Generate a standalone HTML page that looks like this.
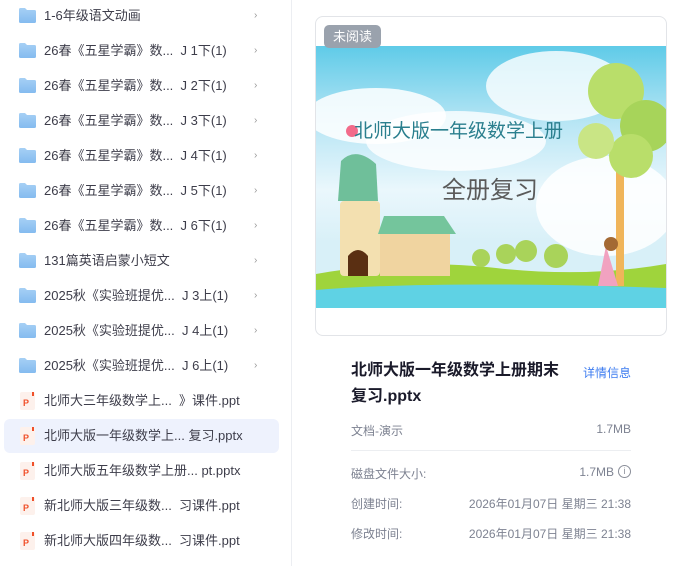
<!DOCTYPE html>
<html><head><meta charset="utf-8"><style>
*{margin:0;padding:0;box-sizing:border-box}
body{width:681px;height:566px;background:#fff;font-family:"Liberation Sans","Noto Sans CJK SC",sans-serif;position:relative;overflow:hidden;color:#333}
.row{position:absolute;left:4px;width:275px;height:34px;border-radius:6px;font-size:13px;color:#3d3d4a;line-height:34px}
.row .t{position:absolute;left:40px;top:0;white-space:nowrap}
.row .c{position:absolute;left:250px;top:0;color:#999;font-size:10px}
.fold{position:absolute;left:15px;top:9px;width:17px;height:15px}
.ppt{position:absolute;left:16px;top:8px;width:15px;height:18px;background:#fdf1ec;border-radius:2px}
.ppt b{position:absolute;left:3px;top:6px;font-size:9px;color:#f0502a;font-weight:bold;line-height:10px}
.ppt i{position:absolute;right:1px;top:0;width:2px;height:4px;background:#f0502a}
.sel{background:#eef2fd}
.card{position:absolute;left:315px;top:16px;width:352px;height:320px;border:1px solid #e2e4e8;border-radius:8px;overflow:hidden}
.img{position:absolute;left:0;top:29px;width:350px;height:262px;background:linear-gradient(180deg,#5fcbe8 0%,#b9e6f5 30%,#eaf7fc 55%,#d8f0f8 75%)}
.lbl{position:absolute;color:#7d8291;font-size:12px}
</style></head><body>
<div style="position:absolute;left:291px;top:0;width:1px;height:566px;background:#eceef2"></div>

<svg width="0" height="0" style="position:absolute"><defs><linearGradient id="fg" x1="0" y1="0" x2="0" y2="1"><stop offset="0" stop-color="#a6d0f5"/><stop offset="1" stop-color="#84bbef"/></linearGradient></defs></svg>

<div class="row" style="top:-1px"><svg class="fold" viewBox="0 0 17 15"><path d="M0 1.5Q0 0 1.5 0H6l2 2h7.5Q17 2 17 3.5V13.5Q17 15 15.5 15H1.5Q0 15 0 13.5Z" fill="url(#fg)"/></svg><span class="t">1-6年级语文动画</span><span class="c">›</span></div>
<div class="row" style="top:34px"><svg class="fold" viewBox="0 0 17 15"><path d="M0 1.5Q0 0 1.5 0H6l2 2h7.5Q17 2 17 3.5V13.5Q17 15 15.5 15H1.5Q0 15 0 13.5Z" fill="url(#fg)"/></svg><span class="t">26春《五星学霸》数...&nbsp;&nbsp;J 1下(1)</span><span class="c">›</span></div>
<div class="row" style="top:69px"><svg class="fold" viewBox="0 0 17 15"><path d="M0 1.5Q0 0 1.5 0H6l2 2h7.5Q17 2 17 3.5V13.5Q17 15 15.5 15H1.5Q0 15 0 13.5Z" fill="url(#fg)"/></svg><span class="t">26春《五星学霸》数...&nbsp;&nbsp;J 2下(1)</span><span class="c">›</span></div>
<div class="row" style="top:104px"><svg class="fold" viewBox="0 0 17 15"><path d="M0 1.5Q0 0 1.5 0H6l2 2h7.5Q17 2 17 3.5V13.5Q17 15 15.5 15H1.5Q0 15 0 13.5Z" fill="url(#fg)"/></svg><span class="t">26春《五星学霸》数...&nbsp;&nbsp;J 3下(1)</span><span class="c">›</span></div>
<div class="row" style="top:139px"><svg class="fold" viewBox="0 0 17 15"><path d="M0 1.5Q0 0 1.5 0H6l2 2h7.5Q17 2 17 3.5V13.5Q17 15 15.5 15H1.5Q0 15 0 13.5Z" fill="url(#fg)"/></svg><span class="t">26春《五星学霸》数...&nbsp;&nbsp;J 4下(1)</span><span class="c">›</span></div>
<div class="row" style="top:174px"><svg class="fold" viewBox="0 0 17 15"><path d="M0 1.5Q0 0 1.5 0H6l2 2h7.5Q17 2 17 3.5V13.5Q17 15 15.5 15H1.5Q0 15 0 13.5Z" fill="url(#fg)"/></svg><span class="t">26春《五星学霸》数...&nbsp;&nbsp;J 5下(1)</span><span class="c">›</span></div>
<div class="row" style="top:209px"><svg class="fold" viewBox="0 0 17 15"><path d="M0 1.5Q0 0 1.5 0H6l2 2h7.5Q17 2 17 3.5V13.5Q17 15 15.5 15H1.5Q0 15 0 13.5Z" fill="url(#fg)"/></svg><span class="t">26春《五星学霸》数...&nbsp;&nbsp;J 6下(1)</span><span class="c">›</span></div>
<div class="row" style="top:244px"><svg class="fold" viewBox="0 0 17 15"><path d="M0 1.5Q0 0 1.5 0H6l2 2h7.5Q17 2 17 3.5V13.5Q17 15 15.5 15H1.5Q0 15 0 13.5Z" fill="url(#fg)"/></svg><span class="t">131篇英语启蒙小短文</span><span class="c">›</span></div>
<div class="row" style="top:279px"><svg class="fold" viewBox="0 0 17 15"><path d="M0 1.5Q0 0 1.5 0H6l2 2h7.5Q17 2 17 3.5V13.5Q17 15 15.5 15H1.5Q0 15 0 13.5Z" fill="url(#fg)"/></svg><span class="t">2025秋《实验班提优...&nbsp;&nbsp;J 3上(1)</span><span class="c">›</span></div>
<div class="row" style="top:314px"><svg class="fold" viewBox="0 0 17 15"><path d="M0 1.5Q0 0 1.5 0H6l2 2h7.5Q17 2 17 3.5V13.5Q17 15 15.5 15H1.5Q0 15 0 13.5Z" fill="url(#fg)"/></svg><span class="t">2025秋《实验班提优...&nbsp;&nbsp;J 4上(1)</span><span class="c">›</span></div>
<div class="row" style="top:349px"><svg class="fold" viewBox="0 0 17 15"><path d="M0 1.5Q0 0 1.5 0H6l2 2h7.5Q17 2 17 3.5V13.5Q17 15 15.5 15H1.5Q0 15 0 13.5Z" fill="url(#fg)"/></svg><span class="t">2025秋《实验班提优...&nbsp;&nbsp;J 6上(1)</span><span class="c">›</span></div>
<div class="row" style="top:384px"><div class="ppt"><b>P</b><i></i></div><span class="t">北师大三年级数学上...&nbsp;&nbsp;》课件.ppt</span></div>
<div class="row sel" style="top:419px"><div class="ppt"><b>P</b><i></i></div><span class="t">北师大版一年级数学上... 复习.pptx</span></div>
<div class="row" style="top:454px"><div class="ppt"><b>P</b><i></i></div><span class="t">北师大版五年级数学上册... pt.pptx</span></div>
<div class="row" style="top:489px"><div class="ppt"><b>P</b><i></i></div><span class="t">新北师大版三年级数...&nbsp;&nbsp;习课件.ppt</span></div>
<div class="row" style="top:524px"><div class="ppt"><b>P</b><i></i></div><span class="t">新北师大版四年级数...&nbsp;&nbsp;习课件.ppt</span></div>

<div class="card">
 <div class="img">
  <svg width="350" height="262" style="position:absolute;left:0;top:0">
   <ellipse cx="60" cy="70" rx="70" ry="28" fill="#fff" opacity=".85"/>
   <ellipse cx="140" cy="95" rx="90" ry="30" fill="#fff" opacity=".8"/>
   <ellipse cx="240" cy="40" rx="70" ry="35" fill="#fff" opacity=".8"/>
   <ellipse cx="290" cy="160" rx="70" ry="50" fill="#fff" opacity=".85"/>
   <path d="M0 228Q90 212 180 222T350 218V262H0Z" fill="#9fd43c"/>
   <path d="M0 244Q120 234 350 242V262H0Z" fill="#5fd2e4"/>
   <path d="M25 115Q40 100 60 118L62 155H22Z" fill="#6fbf9a"/>
   <rect x="24" y="155" width="40" height="75" rx="4" fill="#f3e0b0"/>
   <path d="M32 230V210Q42 198 52 210V230Z" fill="#5a2f12"/>
   <rect x="64" y="185" width="70" height="45" fill="#f0d4a0"/>
   <path d="M62 188L68 170H128L140 188Z" fill="#74c59c"/>
   <circle cx="36" cy="85" r="6" fill="#f26b8a"/>
   <rect x="300" y="110" width="8" height="130" fill="#f0b55a"/>
   <circle cx="300" cy="45" r="28" fill="#b9de6a"/>
   <circle cx="330" cy="80" r="26" fill="#a7d45a"/>
   <circle cx="315" cy="110" r="22" fill="#b9de6a"/>
   <circle cx="280" cy="95" r="18" fill="#c9e585"/>
   <circle cx="190" cy="208" r="10" fill="#a9d35a"/><circle cx="210" cy="205" r="11" fill="#a9d35a"/><circle cx="240" cy="210" r="12" fill="#a9d35a"/><circle cx="165" cy="212" r="9" fill="#a9d35a"/>
   <path d="M290 200L302 240H282Z" fill="#f1a2c0"/>
   <circle cx="295" cy="198" r="7" fill="#a46a34"/>
  </svg>
  <div style="position:absolute;left:38px;top:70px;font-size:19px;color:#2a7f8e;white-space:nowrap">北师大版一年级数学上册</div>
  <div style="position:absolute;left:126px;top:124px;font-size:24px;color:#5a5a5a;white-space:nowrap">全册复习</div>
 </div>
 <div style="position:absolute;left:8px;top:8px;width:57px;height:23px;background:#9aa2ad;border-radius:5px;color:#fff;font-size:13px;line-height:23px;text-align:center">未阅读</div>
</div>

<div style="position:absolute;left:351px;top:358px;width:214px;font-size:16px;font-weight:bold;color:#1a1a2a;line-height:26px">北师大版一年级数学上册期末复习.pptx</div>
<div style="position:absolute;left:583px;top:364px;font-size:12px;color:#3d7cf0">详情信息</div>
<div class="lbl" style="left:351px;top:422px">文档-演示</div>
<div class="lbl" style="right:50px;top:422px">1.7MB</div>
<div style="position:absolute;left:351px;top:450px;width:280px;height:1px;background:#eceef1"></div>
<div class="lbl" style="left:351px;top:465px">磁盘文件大小:</div>
<div class="lbl" style="right:67px;top:465px">1.7MB</div>
<div style="position:absolute;left:618px;top:465px;width:13px;height:13px;border:1px solid #8a8e99;border-radius:50%;font-size:9px;color:#8a8e99;text-align:center;line-height:11px">i</div>
<div class="lbl" style="left:351px;top:495px">创建时间:</div>
<div class="lbl" style="right:50px;top:495px">2026年01月07日 星期三 21:38</div>
<div class="lbl" style="left:351px;top:525px">修改时间:</div>
<div class="lbl" style="right:50px;top:525px">2026年01月07日 星期三 21:38</div>
</body></html>
